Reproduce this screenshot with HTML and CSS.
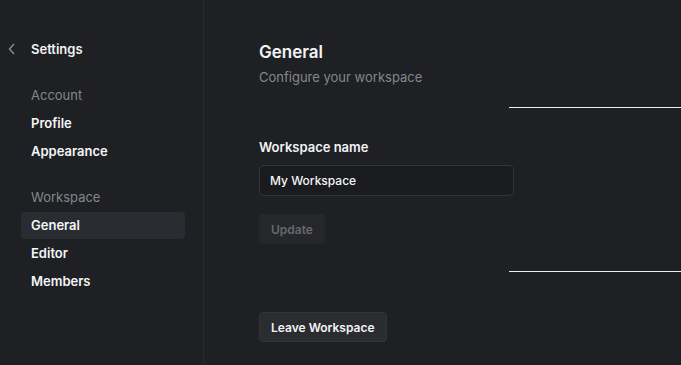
FILE: index.html
```html
<!DOCTYPE html>
<html lang="en">
<head>
    <meta charset="UTF-8">
    <meta name="viewport" content="width=device-width, initial-scale=1.0">
    <title>Settings - General</title>
    <link rel="stylesheet" href="styles.css">
</head>
<body>
    <div class="layout">
        <aside class="sidebar">
            <div class="sidebar-head">
                <svg class="back" width="10" height="14" viewBox="0 0 10 14"><path d="M7 2 L2.5 7 L7 12" fill="none" stroke="#8b8d92" stroke-width="1.4"/></svg>
                <span>Settings</span>
            </div>

            <div class="nav-group">
                <div class="nav-label">Account</div>
                <a class="nav-item">Profile</a>
                <a class="nav-item">Appearance</a>
            </div>

            <div class="nav-group">
                <div class="nav-label">Workspace</div>
                <a class="nav-item active">General</a>
                <a class="nav-item">Editor</a>
                <a class="nav-item">Members</a>
            </div>
        </aside>

        <main class="content">
            <h1>General</h1>
            <p class="subtitle">Configure your workspace</p>

            <div class="separator"></div>

            <form class="form-group">
                <label for="wsname">Workspace name</label>
                <input type="text" id="wsname" value="My Workspace">
                <button type="button" class="btn btn-disabled">Update</button>
            </form>

            <div class="separator"></div>

            <button type="button" class="btn btn-leave">Leave Workspace</button>
        </main>
    </div>
</body>
</html>
```

FILE: styles.css
```css
body { margin: 0; background: #1f2023; color: #f2f3f5; font-family: Inter, "Noto Sans", sans-serif; font-size: 13px; }
.layout { display: flex; height: 365px; overflow: hidden; }
.sidebar { width: 164px; padding: 0 18px 0 21px; border-right: 1px solid #2a2b2f; flex-shrink: 0; }
.sidebar-head { display: flex; align-items: center; height: 20px; margin: 39px 0 0 -14px; font-weight: 600; }
.back { margin-right: 14px; }
.nav-group { margin-top: 26px; }
.nav-group + .nav-group { margin-top: 22px; }
.nav-label { color: #84868b; height: 20px; line-height: 20px; padding-left: 10px; margin-bottom: 5px; }
.nav-item { display: block; height: 27px; line-height: 27px; padding: 0 10px; margin-bottom: 1px; border-radius: 4px; font-weight: 600; color: #f5f6f8; }
.nav-item.active { background: #2a2c31; }
.content { flex: 1; padding-left: 55px; }
h1 { margin: 41px 0 0; font-size: 17px; font-weight: 600; line-height: 22px; }
.subtitle { margin: 5px 0 0; color: #85878c; line-height: 18px; }
.separator { height: 1px; background: #f0f0f0; margin: 21px 0 0 250px; }
.form-group { margin: 30px 0 0; }
label { display: block; font-weight: 600; line-height: 18px; margin-bottom: 9px; }
input { display: block; box-sizing: border-box; width: 255px; height: 31px; padding: 0 10px; background: #1a1b1e; border: 1px solid #33353a; border-radius: 5px; color: #f5f6f8; font: inherit; font-size: 12px; font-weight: 500; outline: none; }
.btn { display: block; height: 30px; padding: 0 11px; border: 1px solid #2c2e32; border-radius: 4px; font: inherit; font-size: 12px; font-weight: 600; }
.btn-disabled { margin-top: 18px; background: #26272b; border-color: #26272b; color: #66686d; }
.form-group + .separator { margin-top: 27px; }
.btn-leave { margin-top: 40px; background: #2a2c30; color: #f2f3f5; border-color: #323439; }
```
